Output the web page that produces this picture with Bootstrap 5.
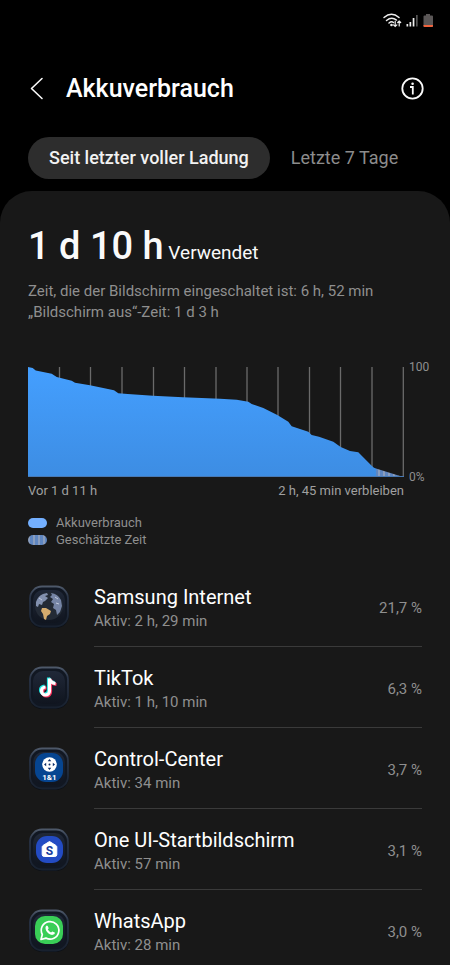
<!DOCTYPE html>
<html lang="de" data-bs-theme="dark">
<head>
<meta charset="utf-8">
<meta name="viewport" content="width=device-width, initial-scale=1">
<title>Akkuverbrauch</title>
<link rel="stylesheet" href="https://cdn.jsdelivr.net/npm/bootstrap@5.3.0/dist/css/bootstrap.min.css">
<style>
body { background: #000; color: #fafafa; font-family: Roboto, "Noto Sans", sans-serif; line-height: 24px; }
svg { display: block; flex: none; }
.status-bar { height: 40px; padding: 0 16px; }
.app-bar { height: 97px; padding: 0 26px 0 28px; }
.app-bar h1 { font-size: 25px; line-height: 32px; font-weight: 500; margin-left: 20px; }
.icon-btn { color: inherit; background: none; }
.period { height: 42px; margin: 0 28px; }
.period .nav-link { font-size: 18px; line-height: 24px; padding: 9px 21px; color: #8c8c8c; border-radius: 21px; }
.period .nav-link.active { background: #2d2d2d; color: #f2f2f2; font-weight: 500; }
.sheet { background: #181818; border-radius: 32px 32px 0 0; margin-top: 12px; padding: 32px 28px 0; }
.total { line-height: 46px; font-size: 19px; }
.total strong { font-size: 38px; font-weight: 500; }
.muted { color: #8f8f8f; }
.summary { font-size: 15px; line-height: 21px; margin-top: 5px; }
.chart { margin: 44px -10px 0 0; }
.plot { height: 110px; width: 100%; flex: 1 1 0; min-width: 0; }
.scale { width: 28px; font-size: 12px; line-height: 12px; margin: -6px 0; padding-left: 5px; }
.chart-foot { font-size: 13px; line-height: 16px; padding-top: 6px; color: #a0a0a0; margin-right: 18px; }
.legend { font-size: 13px; line-height: 17px; margin-top: 15px; }
.legend svg { margin-right: 9px; }
.apps { margin: 18px 0 0; }
.app-icon { margin: 19px 24px 0 0; }
.app-text { border-bottom: 1px solid #3a3a3a; padding: 18px 0 14px; }
.app-row:last-child .app-text { border: 0; padding-bottom: 8px; }
.app-row h2 { font-size: 20px; line-height: 26px; font-weight: 400; }
.app-row p { font-size: 15px; line-height: 22px; }
.share { font-size: 15px; }
</style>
<script src="https://cdn.jsdelivr.net/npm/bootstrap@5.3.0/dist/js/bootstrap.bundle.min.js"></script>
</head>
<body class="min-vh-100 d-flex flex-column">
<svg width="0" height="0" class="position-absolute" aria-hidden="true">
  <defs>
    <linearGradient id="rim" x1="0" y1="0" x2="0" y2="1"><stop offset="0" stop-color="#4d5869"/><stop offset=".25" stop-color="#2a3446"/><stop offset="1" stop-color="#18212f"/></linearGradient>
    <linearGradient id="face" x1="0" y1="0" x2="0" y2="1"><stop offset="0" stop-color="#202838"/><stop offset="1" stop-color="#10151f"/></linearGradient>
    <symbol id="tile" viewBox="0 0 42 44">
      <rect x="1" y="1" width="40" height="42" rx="13" fill="#0c1017"/>
      <rect x="2" y="1.500" width="38" height="40" rx="12" fill="#111722" stroke="url(#rim)" stroke-width="1.800"/>
      <rect x="5" y="5" width="32" height="33" rx="10" fill="url(#face)"/>
    </symbol>
  </defs>
</svg>

<header>
  <div class="status-bar d-flex align-items-center justify-content-end">
    <svg width="52" height="20" viewBox="0 0 52 20" role="img" aria-label="WLAN, Mobilfunk, Akku schwach">
      <g fill="none" stroke="#eee" stroke-width="1.500" stroke-linecap="round">
        <path d="M2 7.500Q9.500 1 17 7.500M4.500 10.500Q9.500 6.200 14.500 10M7 13Q9.500 11 11.500 12.500"/>
        <path d="M13.200 11v5.500M11.500 14.800l1.700 1.700 1.700-1.700M17.200 16v-5M15.700 12.500l1.500-1.500 1.500 1.500" stroke-width="1.200"/>
      </g>
      <circle cx="9.500" cy="15" r="1.300" fill="#eee"/>
      <path d="M24.500 14h1.700v2.500h-1.700zM27.500 12h1.700v4.500h-1.700zM30.700 8h1.700v8.500h-1.700z" fill="#eee"/>
      <path d="M34 5h1.700v11.500H34z" fill="#555"/>
      <path d="M44 4h4v1.500h2a1 1 0 0 1 1 1V16a1 1 0 0 1-1 1h-7.500a1 1 0 0 1-1-1V6.500a1 1 0 0 1 1-1H44z" fill="#5b5757"/>
      <path d="M41.500 15H51v1a1 1 0 0 1-1 1h-7.500a1 1 0 0 1-1-1z" fill="#f0633d"/>
    </svg>
  </div>
  <div class="app-bar d-flex align-items-center">
    <button type="button" class="icon-btn border-0 p-0" aria-label="Zurück">
      <svg width="18" height="24" viewBox="0 0 18 24" fill="none" stroke="currentColor" stroke-width="1.600" stroke-linecap="round" stroke-linejoin="round"><path d="M14 1.500 3.500 11.500 14 21.500"/></svg>
    </button>
    <h1 class="mb-0 flex-grow-1">Akkuverbrauch</h1>
    <button type="button" class="icon-btn border-0 p-0" aria-label="Info">
      <svg width="24" height="24" viewBox="0 0 24 24" fill="none" stroke="currentColor"><circle cx="12.500" cy="11.500" r="10.200" stroke-width="1.800"/><path d="M10 10h2.800v7.500" stroke-width="1.800"/><circle cx="12.600" cy="6.800" r="1.300" fill="currentColor" stroke="none"/></svg>
    </button>
  </div>
  <nav class="period nav nav-pills flex-nowrap" aria-label="Zeitraum">
    <button type="button" class="nav-link active text-nowrap" aria-current="true">Seit letzter voller Ladung</button>
    <button type="button" class="nav-link text-nowrap">Letzte 7 Tage</button>
  </nav>
</header>

<main class="sheet flex-grow-1">
  <div class="total"><strong>1 d 10 h</strong> Verwendet</div>
  <p class="summary muted mb-0">Zeit, die der Bildschirm eingeschaltet ist: 6 h, 52 min<br>„Bildschirm aus“-Zeit: 1 d 3 h</p>

  <section aria-label="Akkuverlauf">
    <div class="chart d-flex">
      <svg class="plot" viewBox="0 0 376 110" preserveAspectRatio="none" role="img" aria-label="Akkustand über die Zeit">
        <defs>
          <linearGradient id="fill" x1="0" y1="0" x2="0" y2="1"><stop offset="0" stop-color="#449fff"/><stop offset="1" stop-color="#3d8de3"/></linearGradient>
          <pattern id="stripes" width="5" height="8" patternUnits="userSpaceOnUse"><rect width="5" height="8" fill="#5f86c0"/><rect width="2" height="8" fill="#8a9dbd"/></pattern>
        </defs>
        <path d="M31.500 0v109M62.500 0v109M94 0v109M125.500 0v109M156.500 0v109M188 0v109M219 0v109M250 0v109M281.500 0v109M312.500 0v109M344 0v109M375.300 0v110" stroke="#6a6a6a" stroke-width="1.300"/>
        <path d="M0 109V0L4.700 1 7.700 3.500 23.700 6.700 28.700 10 43.700 13.700 47 15.700 62 18.300 86 23.300 90.300 26.300 99.700 27 125 28.700 155 30.300 192 31.700 208.700 32.700 220.300 34.700 223.700 37 235.300 41 249.300 48 260.300 54.700 263.700 59.300 280.300 64.700 283.700 68 291 69.700 305.300 74.700 312.700 80 322 84 330.300 85.300 332 87 343.700 98.700 346 100.700 348 101.500V109z" fill="url(#fill)"/>
        <path d="M348 101.500 372 109h-24z" fill="url(#stripes)"/>
        <path d="M0 109.500h376" stroke="#4779b5"/>
      </svg>
      <div class="scale muted d-flex flex-column justify-content-between"><span>100</span><span>0%</span></div>
    </div>
    <div class="chart-foot d-flex justify-content-between"><span>Vor 1 d 11 h</span><span>2 h, 45 min verbleiben</span></div>
    <ul class="legend muted list-unstyled mb-0">
      <li class="d-flex align-items-center"><svg width="19" height="10" viewBox="0 0 19 10"><rect width="19" height="10" rx="5" fill="#73afff"/></svg>Akkuverbrauch</li>
      <li class="d-flex align-items-center"><svg width="19" height="10" viewBox="0 0 19 10"><rect width="19" height="10" rx="5" fill="url(#stripes)"/></svg>Geschätzte Zeit</li>
    </ul>
  </section>

  <ul class="apps list-unstyled mb-0">
    <li class="app-row d-flex align-items-start">
      <svg class="app-icon" width="42" height="44" viewBox="0 0 42 44" aria-hidden="true"><use href="#tile"/>
        <circle cx="21" cy="21" r="14" fill="#232a35"/>
        <path d="M8 17q2-6 7-8l4-1 1 2-3 1 3 2-3 3-2 1-1 3-3-1-1 3-2-1z" fill="#8290ae"/>
        <path d="M23 8q7 1 10 7l1 6-2 6-3 3-1-5-3-2 1-4-3-2 2-3-3-2 2-2z" fill="#7584a5"/>
        <path d="M14 23l4 0 5 3-1 3-3 2-1 4-2-1-1-5-2-3z" fill="#d5ac6e"/>
        <path d="M11 13l3 2M27 12l3 2M28 18l3 1" stroke="#c0c9dc"/>
      </svg>
      <div class="app-text flex-grow-1 d-flex align-items-center justify-content-between">
        <div><h2 class="mb-0">Samsung Internet</h2><p class="muted mb-0">Aktiv: 2 h, 29 min</p></div><span class="share muted">21,7 %</span>
      </div>
    </li>
    <li class="app-row d-flex align-items-start">
      <svg class="app-icon" width="42" height="44" viewBox="0 0 42 44" aria-hidden="true"><use href="#tile"/>
        <g fill="none" stroke-width="3.200"><path d="M21.500 12.500v12.500a4 4 0 1 1-4-4M21.500 12.500q1 4.500 6 5" stroke="#20e5df" transform="translate(-1 -1)"/><path d="M21.500 12.500v12.500a4 4 0 1 1-4-4M21.500 12.500q1 4.500 6 5" stroke="#fa315c" transform="translate(1 1)"/><path d="M21.500 12.500v12.500a4 4 0 1 1-4-4M21.500 12.500q1 4.500 6 5" stroke="#fff"/></g>
      </svg>
      <div class="app-text flex-grow-1 d-flex align-items-center justify-content-between">
        <div><h2 class="mb-0">TikTok</h2><p class="muted mb-0">Aktiv: 1 h, 10 min</p></div><span class="share muted">6,3 %</span>
      </div>
    </li>
    <li class="app-row d-flex align-items-start">
      <svg class="app-icon" width="42" height="44" viewBox="0 0 42 44" aria-hidden="true"><use href="#tile"/>
        <rect x="7" y="6" width="28" height="29" rx="11" fill="#064591"/>
        <circle cx="21.500" cy="17.500" r="7.300" fill="#fff"/>
        <path d="M21.500 12l1.800 2.200h-3.600zM21.500 23l1.800-2.200h-3.600zM16 17.500l2.200-1.800v3.600zM27 17.500l-2.200-1.800v3.600z" fill="#082a66"/><circle cx="21.500" cy="17.500" r="1" fill="#082a66"/>
        <text x="21.500" y="32.500" text-anchor="middle" font-size="8" font-weight="700" fill="#fff">1&amp;1</text>
      </svg>
      <div class="app-text flex-grow-1 d-flex align-items-center justify-content-between">
        <div><h2 class="mb-0">Control-Center</h2><p class="muted mb-0">Aktiv: 34 min</p></div><span class="share muted">3,7 %</span>
      </div>
    </li>
    <li class="app-row d-flex align-items-start">
      <svg class="app-icon" width="42" height="44" viewBox="0 0 42 44" aria-hidden="true"><use href="#tile"/>
        <rect x="8" y="8" width="27" height="27" rx="11" fill="#234bc3"/>
        <path d="M21.500 13.500 28 17.500q.8.500.8 1.500v7.500q0 2-2 2H16.200q-2 0-2-2V19q0-1 .8-1.500z" fill="#fff" stroke="#fff" stroke-linejoin="round"/>
        <text x="21.500" y="27" text-anchor="middle" font-size="12" font-weight="700" fill="#173a9d">S</text>
      </svg>
      <div class="app-text flex-grow-1 d-flex align-items-center justify-content-between">
        <div><h2 class="mb-0">One UI-Startbildschirm</h2><p class="muted mb-0">Aktiv: 57 min</p></div><span class="share muted">3,1 %</span>
      </div>
    </li>
    <li class="app-row d-flex align-items-start">
      <svg class="app-icon" width="42" height="44" viewBox="0 0 42 44" aria-hidden="true"><use href="#tile"/>
        <rect x="7" y="7" width="28" height="28" rx="10" fill="#39ce57"/>
        <path d="M13 30.500l1.300-5a8.800 8.800 0 1 1 3.600 3.600z" fill="none" stroke="#fff" stroke-width="1.700" stroke-linejoin="round"/>
        <path d="M17.500 18q1-2.500 2.200-1l1 2.200-.9 1.400q1.200 2.200 3.200 3l1.300-1.200 2.500 1.200q.3 2.200-2.700 2.300-3.600-.2-5.800-3.800-1-1.700-.8-4.100z" fill="#fff"/>
      </svg>
      <div class="app-text flex-grow-1 d-flex align-items-center justify-content-between">
        <div><h2 class="mb-0">WhatsApp</h2><p class="muted mb-0">Aktiv: 28 min</p></div><span class="share muted">3,0 %</span>
      </div>
    </li>
  </ul>
</main>
</body>
</html>
